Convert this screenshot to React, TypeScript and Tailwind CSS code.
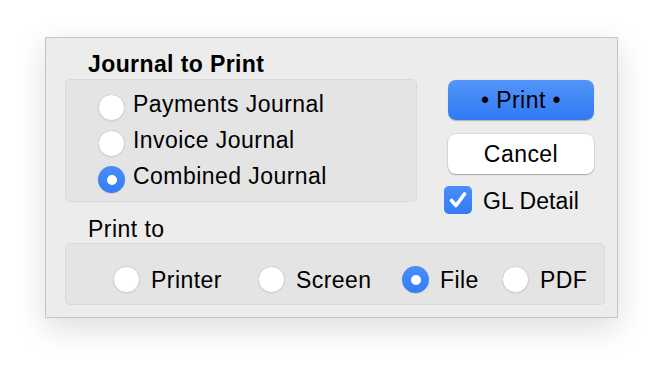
import React from "react";

const font = { fontFamily: '"Liberation Sans", Arial, sans-serif' };

function Radio({ checked }: { checked?: boolean }) {
  if (checked) {
    return (
      <div className="w-[27px] h-[27px] shrink-0 rounded-full bg-gradient-to-b from-[#4a8ef8] to-[#347cf6] flex items-center justify-center shadow-[0_0.5px_1px_rgba(0,0,0,0.2)]">
        <div className="w-[10px] h-[10px] rounded-full bg-white" />
      </div>
    );
  }
  return (
    <div className="w-[27px] h-[27px] shrink-0 rounded-full bg-white border border-[#d4d4d4] shadow-[0_0.5px_1px_rgba(0,0,0,0.1)]" />
  );
}

function TopRow({ label, checked }: { label: string; checked?: boolean }) {
  return (
    <div className="h-[36px] flex items-start">
      <div className="mt-[5px]">
        <Radio checked={checked} />
      </div>
      <span className="ml-[8px] mt-[2px] text-[23px] leading-[26px] tracking-[0.45px] text-black">
        {label}
      </span>
    </div>
  );
}

function BottomItem({ label, checked, w }: { label: string; checked?: boolean; w: string }) {
  return (
    <div className={`flex items-center h-[27px] ${w}`}>
      <Radio checked={checked} />
      <span className="ml-[11px] text-[23px] leading-[26px] tracking-[0.45px] text-black">{label}</span>
    </div>
  );
}

export default function App() {
  return (
    <div className="w-[664px] h-[372px] bg-white pt-[37px] pl-[45px]" style={font}>
      <div className="w-[573px] h-[281px] bg-[#ececec] border border-[#c4c4c4] shadow-[0_10px_30px_rgba(0,0,0,0.14)] pl-[19px] pt-[13px] box-border">
        <div className="flex h-[151px]">
          <div className="w-[352px]">
            <div className="pl-[23px] h-[26px] text-[23px] leading-[26px] font-bold tracking-[0.4px] text-black">
              Journal to Print
            </div>
            <div className="mt-[2px] h-[123px] rounded-[5px] bg-[#e4e4e4] border border-[#dadada] pl-[32px] pt-[9px] box-border">
              <TopRow label="Payments Journal" />
              <TopRow label="Invoice Journal" />
              <TopRow label="Combined Journal" checked />
            </div>
          </div>
          <div className="ml-[31px] w-[146px] flex flex-col">
            <div className="mt-[29px] h-[40px] shrink-0 rounded-[8px] bg-gradient-to-b from-[#5294f8] to-[#3079f5] flex items-center justify-center text-[23px] tracking-[0.45px] text-black shadow-[0_0.5px_1px_rgba(0,0,0,0.25)]">
              • Print •
            </div>
            <div className="mt-[14px] h-[40px] shrink-0 rounded-[8px] bg-white flex items-center justify-center text-[23px] tracking-[0.45px] text-black shadow-[0_0_0_0.5px_rgba(0,0,0,0.12),0_1px_1.5px_rgba(0,0,0,0.25)]">
              Cancel
            </div>
            <div className="mt-[11px] -ml-[4px] flex items-center shrink-0">
              <div className="w-[28px] h-[28px] shrink-0 rounded-[5px] bg-gradient-to-b from-[#4a8ef8] to-[#347cf6] flex items-center justify-center">
                <svg width="28" height="28" viewBox="0 0 28 28">
                  <path d="M7.5 14.5 L12 19.5 L20.5 8" fill="none" stroke="white" strokeWidth="3.6" strokeLinecap="round" strokeLinejoin="round" />
                </svg>
              </div>
              <span className="ml-[11px] mt-[3px] text-[23px] leading-[26px] tracking-[0.1px] text-black">GL Detail</span>
            </div>
          </div>
        </div>
        <div className="mt-[14px] pl-[23px] h-[26px] text-[23px] leading-[26px] tracking-[0.45px] text-black">
          Print to
        </div>
        <div className="mt-[1px] w-[540px] h-[62px] rounded-[5px] bg-[#e4e4e4] border border-[#dadada] pl-[47px] pt-[22px] box-border flex items-start">
          <BottomItem label="Printer" w="w-[145px]" />
          <BottomItem label="Screen" w="w-[144px]" />
          <BottomItem label="File" checked w="w-[100px]" />
          <BottomItem label="PDF" w="" />
        </div>
      </div>
    </div>
  );
}
